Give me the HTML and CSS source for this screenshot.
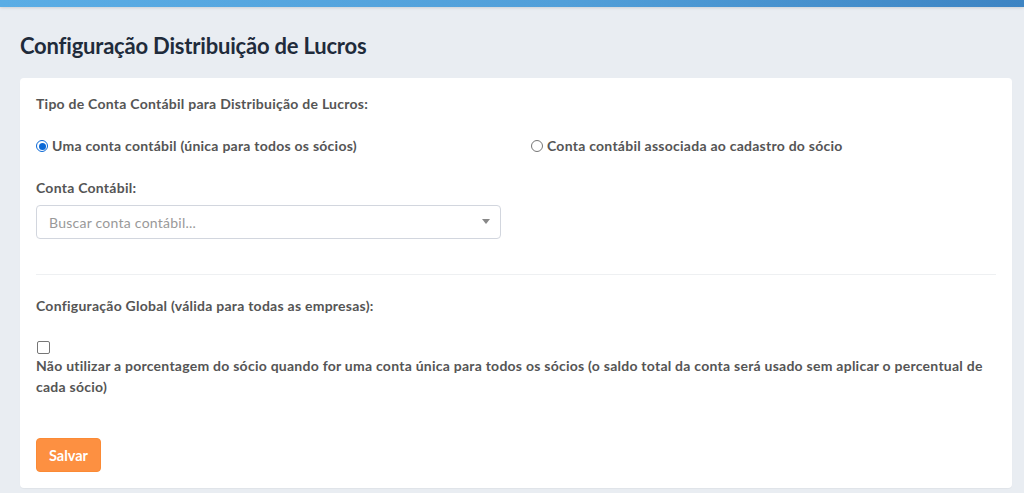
FILE: index.html
```html
<!DOCTYPE html>
<html lang="pt-BR">
<head>
<meta charset="utf-8">
<title>Configuração Distribuição de Lucros</title>
<link rel="stylesheet" href="styles.css">
</head>
<body>
<div class="topbar"></div>
<main class="page">
  <h1 class="title">Configuração Distribuição de Lucros</h1>
  <section class="card">
    <div class="label">Tipo de Conta Contábil para Distribuição de Lucros:</div>
    <div class="cols radios">
      <label class="opt"><span class="radio checked"></span>Uma conta contábil (única para todos os sócios)</label>
      <label class="opt"><span class="radio"></span>Conta contábil associada ao cadastro do sócio</label>
    </div>
    <div class="cols">
      <div>
        <div class="label label-tight">Conta Contábil:</div>
        <div class="select">
          <span class="placeholder">Buscar conta contábil...</span>
          <span class="arrow"></span>
        </div>
      </div>
    </div>
    <hr class="sep">
    <div class="label">Configuração Global (válida para todas as empresas):</div>
    <div class="checkwrap">
      <span class="checkbox"></span>
      <div class="checktext">Não utilizar a porcentagem do sócio quando for uma conta única para todos os sócios (o saldo total da conta será usado sem aplicar o percentual de cada sócio)</div>
    </div>
    <button class="btn" type="button">Salvar</button>
  </section>
</main>
</body>
</html>
```

FILE: styles.css
```css
* { box-sizing: border-box; }
html, body { margin: 0; padding: 0; }
body {
  background: #e9edf2;
  font-family: "Lato", "Liberation Sans", sans-serif;
  color: #555;
  height: 493px;
  overflow: hidden;
}
.topbar {
  height: 7px;
  background: linear-gradient(90deg, #5aade5 0%, #519fd9 55%, #3d84c3 100%);
  box-shadow: 0 1px 3px rgba(0,0,0,0.12);
}
.page { padding: 0 12px 0 20px; }
.title {
  margin: 0;
  padding: 25px 0 0;
  height: 71px;
  font-size: 22px;
  line-height: 28px;
  font-weight: 700;
  color: #1f2b3b;
  letter-spacing: -0.2px;
}
.card {
  background: #fff;
  border-radius: 4px;
  padding: 16px 16px 16px 16px;
  box-shadow: 0 1px 1px rgba(0,0,0,0.04);
}
.label, .opt, .checktext, .placeholder {
  letter-spacing: 0.25px;
}
.label {
  font-size: 14px;
  line-height: 20px;
  font-weight: 700;
  color: #555;
}
.cols {
  display: grid;
  grid-template-columns: 1fr 1fr;
  column-gap: 30px;
}
.radios { margin: 22px 0 22px; }
.opt {
  display: flex;
  align-items: center;
  font-size: 14px;
  line-height: 20px;
  font-weight: 700;
  color: #555;
}
.radio {
  width: 12px; height: 12px;
  border-radius: 50%;
  border: 1px solid #767676;
  margin: 0 4px 0 0;
  flex: none;
  position: relative;
}
.radio.checked {
  border: 1px solid #0a68d6;
  background: #fff;
}
.radio.checked::after {
  content: "";
  position: absolute;
  left: 1.5px; top: 1.5px;
  width: 7px; height: 7px;
  border-radius: 50%;
  background: #0a68d6;
}
.label-tight { margin-bottom: 7px; }
.select {
  height: 34px;
  border: 1px solid #d2d6de;
  border-radius: 4px;
  display: flex;
  align-items: center;
  justify-content: space-between;
  padding: 0 10px 0 12px;
}
.placeholder {
  font-size: 14px;
  color: #999;
}
.arrow {
  width: 0; height: 0;
  border-left: 4px solid transparent;
  border-right: 4px solid transparent;
  border-top: 5px solid #888;
  margin-top: -2px;
}
.sep {
  border: 0;
  border-top: 1px solid #eef0f2;
  margin: 35px 0 21px;
}
.checkwrap { margin-top: 25px; }
.checkbox {
  display: block;
  width: 13px; height: 13px;
  border: 1px solid #767676;
  border-radius: 2px;
  margin-left: 1px;
}
.checktext {
  font-size: 14px;
  line-height: 21px;
  font-weight: 700;
  color: #555;
  margin-top: 1px;
}
.btn {
  margin-top: 41px;
  display: block;
  height: 34px;
  width: 65px;
  border: 1px solid #fb8a35;
  border-radius: 4px;
  background: #fd9041;
  color: #fff;
  font-family: "Lato", "Liberation Sans", sans-serif;
  font-size: 14.5px;
  font-weight: 700;
  padding: 0;
}
```
